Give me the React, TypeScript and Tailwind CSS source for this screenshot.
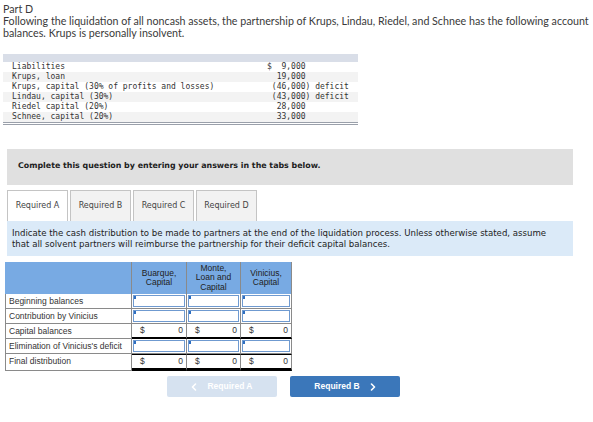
import React from "react";

const mono = { fontFamily: '"DejaVu Sans Mono", "Liberation Mono", monospace' };
const verdana = { fontFamily: '"DejaVu Sans", Verdana, sans-serif' };

const dataRows: [string, string][] = [
  ["Liabilities", "$  9,000"],
  ["Krups, loan", "  19,000"],
  ["Krups, capital (30% of profits and losses)", " (46,000) deficit"],
  ["Lindau, capital (30%)", " (43,000) deficit"],
  ["Riedel capital (20%)", "  28,000"],
  ["Schnee, capital (20%)", "  33,000"],
];

function InputCell() {
  return (
    <div className="h-full border-r border-b border-[#8a8a8a] p-[1px] bg-white">
      <div className="relative h-full border border-[#6f9ad0] bg-white">
        <div className="absolute left-0 top-0 w-[2px] h-[3px] bg-[#2f6fc0]" />
      </div>
    </div>
  );
}

function ValueCell({ bottom }: { bottom: string }) {
  return (
    <div className={`h-full border-r border-[#8a8a8a] flex items-center justify-between px-[8px] pr-[3px] text-[8.5px] text-[#333] ${bottom}`}>
      <span>$</span>
      <span>0</span>
    </div>
  );
}

function Chevron({ dir }: { dir: "left" | "right" }) {
  return (
    <svg width="6" height="8" viewBox="0 0 6 8" fill="none">
      <path
        d={dir === "left" ? "M4.5 1 L1.5 4 L4.5 7" : "M1.5 1 L4.5 4 L1.5 7"}
        stroke="white"
        strokeWidth="1.6"
        strokeLinecap="round"
        strokeLinejoin="round"
      />
    </svg>
  );
}

export default function App() {
  const rows = [
    { label: "Beginning balances", kind: "input" },
    { label: "Contribution by Vinicius", kind: "input" },
    { label: "Capital balances", kind: "sub" },
    { label: "Elimination of Vinicius's deficit", kind: "input" },
    { label: "Final distribution", kind: "final" },
  ];
  return (
    <div className="w-[593px] h-[422px] bg-white overflow-hidden text-[#333]" style={{ fontFamily: '"Liberation Sans", Arial, sans-serif' }}>
      <div className="pl-[3px] pt-[3px] text-[10.7px] leading-[12px] text-[#3a3a3a]" style={{ fontFamily: 'Lato, "Liberation Sans", sans-serif' }}>
        <div>Part D</div>
        <div>
          Following the liquidation of all noncash assets, the partnership of Krups, Lindau, Riedel, and Schnee has the following account balances. Krups is personally insolvent.
        </div>
      </div>

      <div className="ml-[3px] mt-[15px] w-[355px] border-b-[3px] border-double border-[#9aa0aa]" style={mono}>
        <div className="h-[8px] bg-[#d9dee8]" />
        {dataRows.map(([l, v], i) => (
          <div key={i} className={`h-[10px] flex text-[8px] leading-[10px] text-[#333] ${i % 2 === 1 ? "bg-[#f3f3f3]" : "bg-white"}`}>
            <div className="w-[255px] pl-[9px] whitespace-pre">{l}</div>
            <div className="whitespace-pre pl-[9px]">{v}</div>
          </div>
        ))}
      </div>

      <div className="ml-[7px] mt-[24px] w-[566px] h-[36px] bg-[#e0e0e0] flex items-center pl-[11px] pb-[2px]" style={verdana}>
        <span className="text-[7.9px] font-bold text-[#222]">Complete this question by entering your answers in the tabs below.</span>
      </div>

      <div className="ml-[7px] mt-[5px] flex gap-[2px] h-[31px]" style={verdana}>
        {["Required A", "Required B", "Required C", "Required D"].map((t, i) => (
          <div key={t} className={`w-[61px] flex items-center justify-center text-[8px] text-[#444] border border-[#c4c4c4] border-b-0 ${i === 0 ? "bg-white border-[#9a9a9a]" : "bg-[#f2f2f2]"}`}>
            {t}
          </div>
        ))}
      </div>

      <div className="ml-[7px] w-[566px] h-[35px] bg-[#dbeaf8] pl-[5px] pr-[12px] pt-[7px] text-[8.6px] leading-[11px] text-[#222]" style={verdana}>
        Indicate the cash distribution to be made to partners at the end of the liquidation process. Unless otherwise stated, assume that all solvent partners will reimburse the partnership for their deficit capital balances.
      </div>

      <div className="ml-[5px] mt-[6px] w-[287px]">
        <div className="grid grid-cols-[127px_55px_54px_51px] h-[32px] bg-[#78aae3] text-[8.5px] leading-[9.5px] text-[#222] text-center">
          <div className="border-r border-[#8a8a8a]" />
          <div className="border-r border-[#8a8a8a] flex items-center justify-center">Buarque,<br />Capital</div>
          <div className="border-r border-[#8a8a8a] flex items-center justify-center">Monte,<br />Loan and<br />Capital</div>
          <div className="border-r border-[#8a8a8a] flex items-center justify-center">Vinicius,<br />Capital</div>
        </div>
        {rows.map((r) => (
          <div key={r.label} className="grid grid-cols-[127px_55px_54px_51px] h-[15px]">
            <div className="border-l border-r border-b border-[#8a8a8a] text-[8.5px] leading-[14px] pl-[3px] text-[#333] whitespace-nowrap">{r.label}</div>
            {[0, 1, 2].map((c) =>
              r.kind === "input" ? (
                <InputCell key={c} />
              ) : r.kind === "sub" ? (
                <ValueCell key={c} bottom="border-b-2 border-b-black" />
              ) : (
                <ValueCell key={c} bottom="border-t border-t-black border-b-[3px] border-b-black" />
              )
            )}
          </div>
        ))}
      </div>

      <div className="mt-[7px] ml-[167px] flex gap-[13px]">
        <div className="w-[110px] h-[21px] bg-[#d6e2f0] rounded-[2px] flex items-center justify-center gap-[10px] text-white text-[8.5px] font-bold">
          <Chevron dir="left" />
          <span>Required A</span>
        </div>
        <div className="w-[110px] h-[21px] bg-[#3b77ba] rounded-[2px] flex items-center justify-center gap-[10px] text-white text-[8.5px] font-bold">
          <span>Required B</span>
          <Chevron dir="right" />
        </div>
      </div>
    </div>
  );
}
